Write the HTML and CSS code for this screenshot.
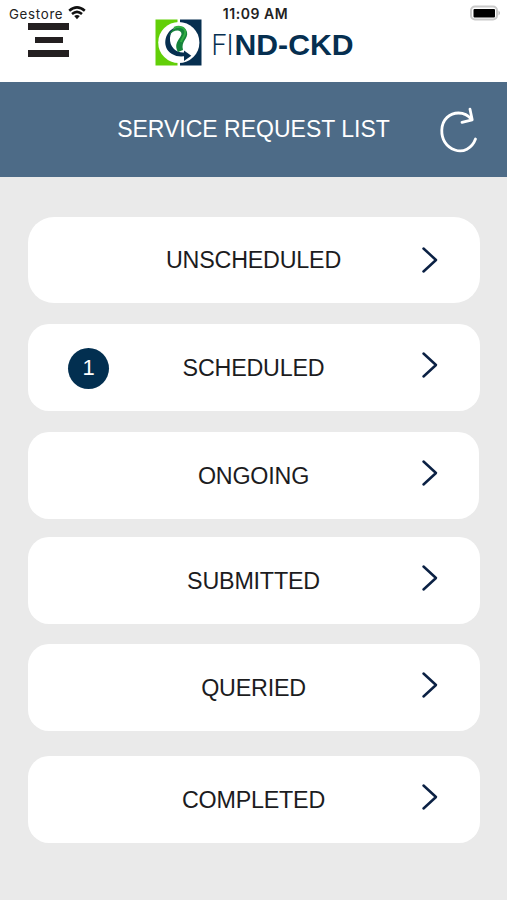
FILE: index.html
```
<!DOCTYPE html>
<html lang="en">
<head>
<meta charset="utf-8">
<title>FIND-CKD</title>
<link rel="stylesheet" href="styles.css">
</head>
<body>
<header class="top">
  <div class="status">
    <div class="carrier"><span>Gestore</span>
      <svg class="wifi" viewBox="0 0 18 14" width="18" height="14"><path d="M1.2 4.8Q9 -2 16.8 4.8M4 8Q9 3.7 14 8" fill="none" stroke="#111" stroke-width="2.5"/><path d="M6.2 10.1Q9 7.7 11.8 10.1L9 13.2Z" fill="#111"/></svg>
    </div>
    <div class="clock">11:09 AM</div>
    <svg class="battery" viewBox="0 0 32 16" width="32" height="16"><rect x="1" y="1.5" width="26" height="13" rx="4" fill="#fff" stroke="#c9c9c9" stroke-width="2"/><rect x="3.5" y="4" width="21.5" height="8.5" rx="1" fill="#000"/><path d="M28.5 5.5Q31.5 8 28.5 10.5Z" fill="#bbb"/></svg>
  </div>
  <div class="nav">
    <div class="menu"><i class="bar"></i><i class="bar short"></i><i class="bar"></i></div>
    <svg class="logo" viewBox="0 0 200 47" width="200" height="47">
      <path d="M.5.5H22.5V46.5H.5Z" fill="#62cf08"/>
      <path d="M25 .5H46.5V46.5H25Z" fill="#062f50"/>
      <circle cx="23.8" cy="23.5" r="20.6" fill="#fff"/>
      <path d="M20 8.5C9 13 6.5 29 17 35C21 37.5 26 38 31 37V33.2C26 34 22 33 19 30C13 24 14 14 20 8.5Z" fill="#062f50"/>
      <path d="M29 31.5L36.3 36.8L29 42Z" fill="#062f50"/>
      <path d="M14 17C16 7 30 5 32 13C33.5 20 25.5 22 28 31L23 33C18 24 25.5 20 26.5 15C26.5 10 18 10 14 17Z" fill="#16843b"/>
      <path d="M19 9C24 6.5 30 8 30.3 13C30.3 17 27 19 26 23" fill="none" stroke="#32ad42" stroke-width="2"/>
      <text class="light" x="56.5" y="35.5" textLength="22" lengthAdjust="spacingAndGlyphs">FI</text>
      <text class="bold" x="79.5" y="35.5" textLength="119" lengthAdjust="spacingAndGlyphs">ND-CKD</text>
    </svg>
  </div>
</header>
<div class="titlebar">
  <h1>SERVICE REQUEST LIST</h1>
  <svg class="refresh" viewBox="0 0 40 48" width="40" height="48"><path d="M36.5 32C33 41.500 24 46 16 43C7 40 2.500 32 2.800 23C3.200 12 11 6 19.500 6C25 6 29 8 32.500 12.500M31 2.200L33.200 12.800L23 15.300" fill="none" stroke="#fff" stroke-width="2.800" stroke-linecap="round" stroke-linejoin="round"/></svg>
</div>
<main class="list">
  <div class="card round"><span></span><span class="label">UNSCHEDULED</span><svg class="chev" viewBox="0 0 18 28"><path d="M2.500 2.500L15 14L2.500 25.500"/></svg></div>
  <div class="card scheduled"><span class="badge">1</span><span class="label">SCHEDULED</span><svg class="chev" viewBox="0 0 18 28"><path d="M2.500 2.500L15 14L2.500 25.500"/></svg></div>
  <div class="card ongoing"><span></span><span class="label">ONGOING</span><svg class="chev" viewBox="0 0 18 28"><path d="M2.500 2.500L15 14L2.500 25.500"/></svg></div>
  <div class="card submitted"><span></span><span class="label">SUBMITTED</span><svg class="chev" viewBox="0 0 18 28"><path d="M2.500 2.500L15 14L2.500 25.500"/></svg></div>
  <div class="card queried"><span></span><span class="label">QUERIED</span><svg class="chev" viewBox="0 0 18 28"><path d="M2.500 2.500L15 14L2.500 25.500"/></svg></div>
  <div class="card completed"><span></span><span class="label">COMPLETED</span><svg class="chev" viewBox="0 0 18 28"><path d="M2.500 2.500L15 14L2.500 25.500"/></svg></div>
</main>
</body>
</html>
```
FILE: styles.css
```
* { box-sizing: border-box; }
body { margin: 0; height: 900px; overflow: hidden; background: #eaeaea; font-family: "Liberation Sans", Arial, sans-serif; color: #1c1c1e; }
svg { display: block; }
.top { height: 82px; background: #fff; }
.status { display: grid; grid-template-columns: 1fr auto 1fr; height: 19px; padding: 5px 5px 0 9px; font: 500 13.3px/18px Inter, sans-serif; color: #222; }
.carrier { display: flex; gap: 5px; font-weight: 400; letter-spacing: .7px; }
.wifi { margin-top: 1px; }
.clock { font-size: 14px; letter-spacing: .55px; font-weight: 600; line-height: 18px; }
.battery { justify-self: end; }
.nav { display: flex; align-items: flex-start; padding-left: 28px; }
.menu { display: flex; flex-direction: column; align-items: center; gap: 7px; width: 41px; margin: 4px 86px 0 0; }
.bar { width: 41px; height: 6.5px; background: #231f20; }
.short { width: 28px; }
.light { font: 300 29.5px Roboto, sans-serif; fill: #062f50; }
.bold { font: 700 29.5px "Liberation Sans", Arial, sans-serif; fill: #062f50; }
.titlebar { display: grid; grid-template-columns: 1fr auto 1fr; align-items: center; height: 94.5px; padding: 0 28px; background: #4d6b87; color: #fff; }
.titlebar h1 { grid-column: 2; margin: 0; font-size: 23px; font-weight: 400; line-height: 28px; white-space: nowrap; }
.refresh { justify-self: end; margin-top: 3px; }
.list { display: flex; flex-direction: column; padding: 40px 27px 0 28px; }
.card { display: grid; grid-template-columns: 1fr auto 1fr; align-items: center; flex: none; height: 86.5px; padding: 0 41px 0 40px; border-radius: 21px; background: #fff; }
.card.round { border-radius: 26px; }
.scheduled { margin-top: 21px; }
.ongoing { margin: 21.5px 1.5px 0 0; padding-right: 39.5px; }
.submitted { margin-top: 18.5px; }
.queried { margin-top: 20.5px; }
.completed { margin-top: 25.5px; }
.label { font-size: 23.3px; line-height: 28px; letter-spacing: -.2px; }
.card:not(.round) .label { padding-top: 2px; }
.badge { display: flex; align-items: center; justify-content: center; width: 41px; height: 41px; margin-top: 2px; border-radius: 50%; background: #022f50; color: #fff; font-size: 22px; }
.chev { justify-self: end; width: 18px; height: 28px; fill: none; stroke: #0b2144; stroke-width: 2.5; stroke-linecap: round; stroke-linejoin: round; }
.card:not(.round) .chev { margin-bottom: 5px; }
```
